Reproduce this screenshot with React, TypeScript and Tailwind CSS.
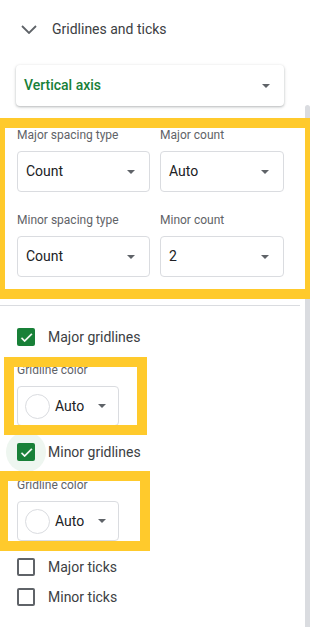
import React from "react";

const Arrow = () => (
  <svg width="8" height="4" viewBox="0 0 8 4" className="shrink-0">
    <polygon points="0,0 8,0 4,4" fill="#5f6368" />
  </svg>
);

const Select = ({ label, value, w }: { label: string; value: string; w: string }) => (
  <div className={`flex flex-col ${w}`}>
    <div className="h-[16px] text-[12px] leading-[16px] text-[#5f6368]">{label}</div>
    <div className="mt-[8px] h-[41px] rounded-[4px] border border-[#dadce0] flex items-center justify-between pl-[8px] pr-[14px] text-[14px] text-[#202124]">
      <span>{value}</span>
      <Arrow />
    </div>
  </div>
);

const Checked = () => (
  <div className="w-[18px] h-[18px] rounded-[2px] bg-[#188038] flex items-center justify-center">
    <svg width="15" height="15" viewBox="0 0 24 24">
      <path d="M9 16.17L4.83 12l-1.42 1.41L9 19 21 7l-1.41-1.41z" fill="#ffffff" stroke="#ffffff" strokeWidth="0.6" />
    </svg>
  </div>
);

const Unchecked = () => (
  <div className="w-[18px] h-[18px] rounded-[2px] border-2 border-[#5f6368] bg-white" />
);

const CheckRow = ({ checked, label, ripple }: { checked: boolean; label: string; ripple?: boolean }) => (
  <div className="h-[30px] flex items-center pl-[17px]">
    <div className="relative w-[18px] h-[18px]">
      {ripple && (
        <div className="absolute left-[-11px] top-[-11px] w-[40px] h-[40px] rounded-full bg-[#eef6f0]" />
      )}
      <div className="relative">{checked ? <Checked /> : <Unchecked />}</div>
    </div>
    <span className="ml-[13px] text-[14px] text-[#3c4043]">{label}</span>
  </div>
);

const ColorPicker = () => (
  <div className="flex flex-col pl-[17px]">
    <div className="h-[16px] text-[12px] leading-[16px] text-[#5f6368]">Gridline color</div>
    <div className="mt-[8px] w-[102px] h-[40px] rounded-[4px] border border-[#dadce0] flex items-center pl-[7px]">
      <div className="w-[25px] h-[25px] rounded-full border border-[#dadce0] bg-white" />
      <span className="ml-[5px] text-[14px] text-[#202124]">Auto</span>
      <span className="ml-[14px]">
        <Arrow />
      </span>
    </div>
  </div>
);

export default function App() {
  return (
    <div
      className="relative w-[310px] h-[629px] bg-white overflow-hidden flex"
      style={{ fontFamily: "Roboto, 'Liberation Sans', sans-serif" }}
    >
      <div className="w-[302px] shrink-0 flex flex-col">
        {/* header */}
        <div className="h-[58px] flex items-center pl-[21px]">
          <svg width="16" height="9" viewBox="0 0 16 9">
            <polyline points="1,1 8,8 15,1" fill="none" stroke="#5f6368" strokeWidth="1.8" />
          </svg>
          <span className="ml-[15px] text-[14px] text-[#3c4043]">Gridlines and ticks</span>
        </div>
        {/* vertical axis */}
        <div className="mt-[7px] ml-[16px] w-[268px] h-[41px] rounded-[4px] bg-white shadow-[0_1px_2px_0_rgba(60,64,67,0.25),0_1px_3px_1px_rgba(60,64,67,0.1)] flex items-center justify-between pl-[8px] pr-[14px]">
          <span className="text-[14px] font-medium text-[#188038]">Vertical axis</span>
          <Arrow />
        </div>
        {/* spacing grid */}
        <div className="mt-[21px] pl-[17px] flex flex-col gap-[20px]">
          <div className="flex gap-[10px]">
            <Select label="Major spacing type" value="Count" w="w-[133px]" />
            <Select label="Major count" value="Auto" w="w-[124px]" />
          </div>
          <div className="flex gap-[10px]">
            <Select label="Minor spacing type" value="Count" w="w-[133px]" />
            <Select label="Minor count" value="2" w="w-[124px]" />
          </div>
        </div>
        <div className="mt-[28px] h-px w-[300px] bg-[#dadce0]" />
        <div className="mt-[16px]">
          <CheckRow checked label="Major gridlines" />
        </div>
        <div className="mt-[10px]">
          <ColorPicker />
        </div>
        <div className="mt-[11px]">
          <CheckRow checked label="Minor gridlines" ripple />
        </div>
        <div className="mt-[10px]">
          <ColorPicker />
        </div>
        <div className="mt-[11px]">
          <CheckRow checked={false} label="Major ticks" />
          <CheckRow checked={false} label="Minor ticks" />
        </div>
      </div>
      {/* scrollbar */}
      <div className="flex-1 pt-[105px] pl-[3px]">
        <div className="w-[5px] h-[522px] rounded-t-[3px] bg-[#dadce0]" />
      </div>

      {/* highlight overlays */}
      <div className="absolute left-0 top-[118px] w-[310px] h-[181px] border-x-[5px] border-y-[10px] border-[#ffca2c] pointer-events-none" />
      <div className="absolute left-[4px] top-[357px] w-[143px] h-[78px] border-[10px] border-[#ffca2c] pointer-events-none" />
      <div className="absolute left-0 top-[471px] w-[150px] h-[80px] border-y-[10px] border-r-[10px] border-l-[8px] border-[#ffca2c] pointer-events-none" />
    </div>
  );
}
